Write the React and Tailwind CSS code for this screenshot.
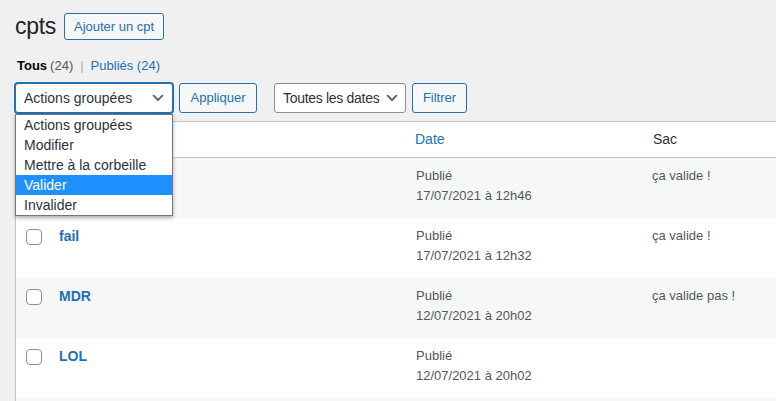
import React from 'react';

const rows = [
  { title: '', date: '17/07/2021 à 12h46', sac: 'ça valide !', hidden: true },
  { title: 'fail', date: '17/07/2021 à 12h32', sac: 'ça valide !' },
  { title: 'MDR', date: '12/07/2021 à 20h02', sac: 'ça valide pas !' },
  { title: 'LOL', date: '12/07/2021 à 20h02', sac: '' },
  { title: '', date: '', sac: '', empty: true },
];

const options = ['Actions groupées', 'Modifier', 'Mettre à la corbeille', 'Valider', 'Invalider'];

function Chevron() {
  return (
    <svg width="16" height="16" viewBox="0 0 20 20" className="shrink-0">
      <path d="M5 6l5 5 5-5 2 1-7 7-7-7 2-1z" fill="#555" />
    </svg>
  );
}

function Checkbox() {
  return <span className="block w-4 h-4 rounded-[4px] border border-[#8c8f94] bg-white" />;
}

function Button({ children, className = '' }) {
  return (
    <div className={`flex items-center justify-center h-[30px] px-[10px] border border-[#2271b1] rounded-[3px] bg-[#f6f7f7] text-[13px] text-[#2271b1] ${className}`}>
      {children}
    </div>
  );
}

export default function App() {
  return (
    <div
      className="w-[776px] h-[401px] overflow-hidden bg-[#f0f0f1] text-[#3c434a] pl-[15px]"
      style={{ fontFamily: '"Liberation Sans", Arial, sans-serif' }}
    >
      {/* Header */}
      <div className="flex items-center h-[29px] mt-[12px]">
        <h1 className="text-[23px] leading-[29px] text-[#1d2327] font-normal tracking-[-0.3px]">cpts</h1>
        <div className="ml-[8px] flex items-center h-[27px] px-[9px] border border-[#2271b1] rounded-[3px] bg-[#f6f7f7] text-[13px] text-[#2271b1]">
          Ajouter un cpt
        </div>
      </div>

      {/* Sub nav */}
      <div className="mt-[15px] h-[20px] leading-[20px] text-[13px] ml-[2px] flex items-center">
        <span className="font-bold text-[#000]">Tous</span>
        <span className="ml-[3px] text-[#50575e]">(24)</span>
        <span className="mx-[7px] text-[#a7aaad]">|</span>
        <span className="text-[#2271b1]">Publiés (24)</span>
      </div>

      {/* Tablenav */}
      <div className="mt-[7px] flex items-center h-[30px]">
        <div className="relative w-[158px] h-[30px]">
          <div className="flex items-center justify-between h-full pl-[8px] pr-[6px] border border-[#2271b1] shadow-[0_0_0_1px_#2271b1] rounded-[3px] bg-white text-[14px] text-[#2c3338] whitespace-nowrap">
            <span>Actions groupées</span>
            <Chevron />
          </div>
          <div className="absolute left-0 top-[31px] w-[158px] z-10 bg-white border border-[#767676] shadow-[0_2px_4px_rgba(0,0,0,0.3)] text-[14px] text-[#2c3338]">
            {options.map((o) => (
              <div
                key={o}
                className={`h-[20px] leading-[20px] pl-[8px] whitespace-nowrap ${o === 'Valider' ? 'bg-[#1e90ff] text-white' : ''}`}
              >
                {o}
              </div>
            ))}
          </div>
        </div>
        <Button className="ml-[6px] w-[78px]">Appliquer</Button>
        <div className="ml-[17px] w-[132px] h-[30px] flex items-center justify-between pl-[8px] pr-[5px] border border-[#8c8f94] rounded-[3px] bg-white text-[14px] text-[#2c3338] whitespace-nowrap">
          <span className="tracking-[-0.3px]">Toutes les dates</span>
          <Chevron />
        </div>
        <Button className="ml-[6px] w-[55px]">Filtrer</Button>
      </div>

      {/* Table */}
      <div className="mt-[8px] w-[800px] bg-white border border-[#c3c4c7] shadow-[0_1px_1px_rgba(0,0,0,0.04)]">
        <div className="grid grid-cols-[33px_357px_237px_1fr] h-[36px] border-b border-[#c3c4c7] items-center text-[14px]">
          <div className="pl-[10px]"><Checkbox /></div>
          <div />
          <div className="pl-[9px] text-[#2271b1]">Date</div>
          <div className="pl-[10px] text-[#2c3338]">Sac</div>
        </div>
        {rows.map((r, i) => (
          <div
            key={i}
            className={`grid grid-cols-[33px_357px_237px_1fr] h-[60px] ${i % 2 === 0 ? 'bg-[#f6f7f7]' : 'bg-white'}`}
          >
            <div className="pl-[10px] pt-[11px]">{!r.empty && <Checkbox />}</div>
            <div className="pl-[10px] pt-[8px] leading-[20px] text-[14px] font-bold text-[#2271b1]">{r.title}</div>
            <div className="pl-[10px] pt-[8px] leading-[20px] text-[13px] text-[#50575e]">
              {!r.empty && (
                <>
                  <div>Publié</div>
                  <div>{r.date}</div>
                </>
              )}
            </div>
            <div className="pl-[9px] pt-[8px] leading-[20px] text-[13px] text-[#50575e]">{r.sac}</div>
          </div>
        ))}
      </div>
    </div>
  );
}
